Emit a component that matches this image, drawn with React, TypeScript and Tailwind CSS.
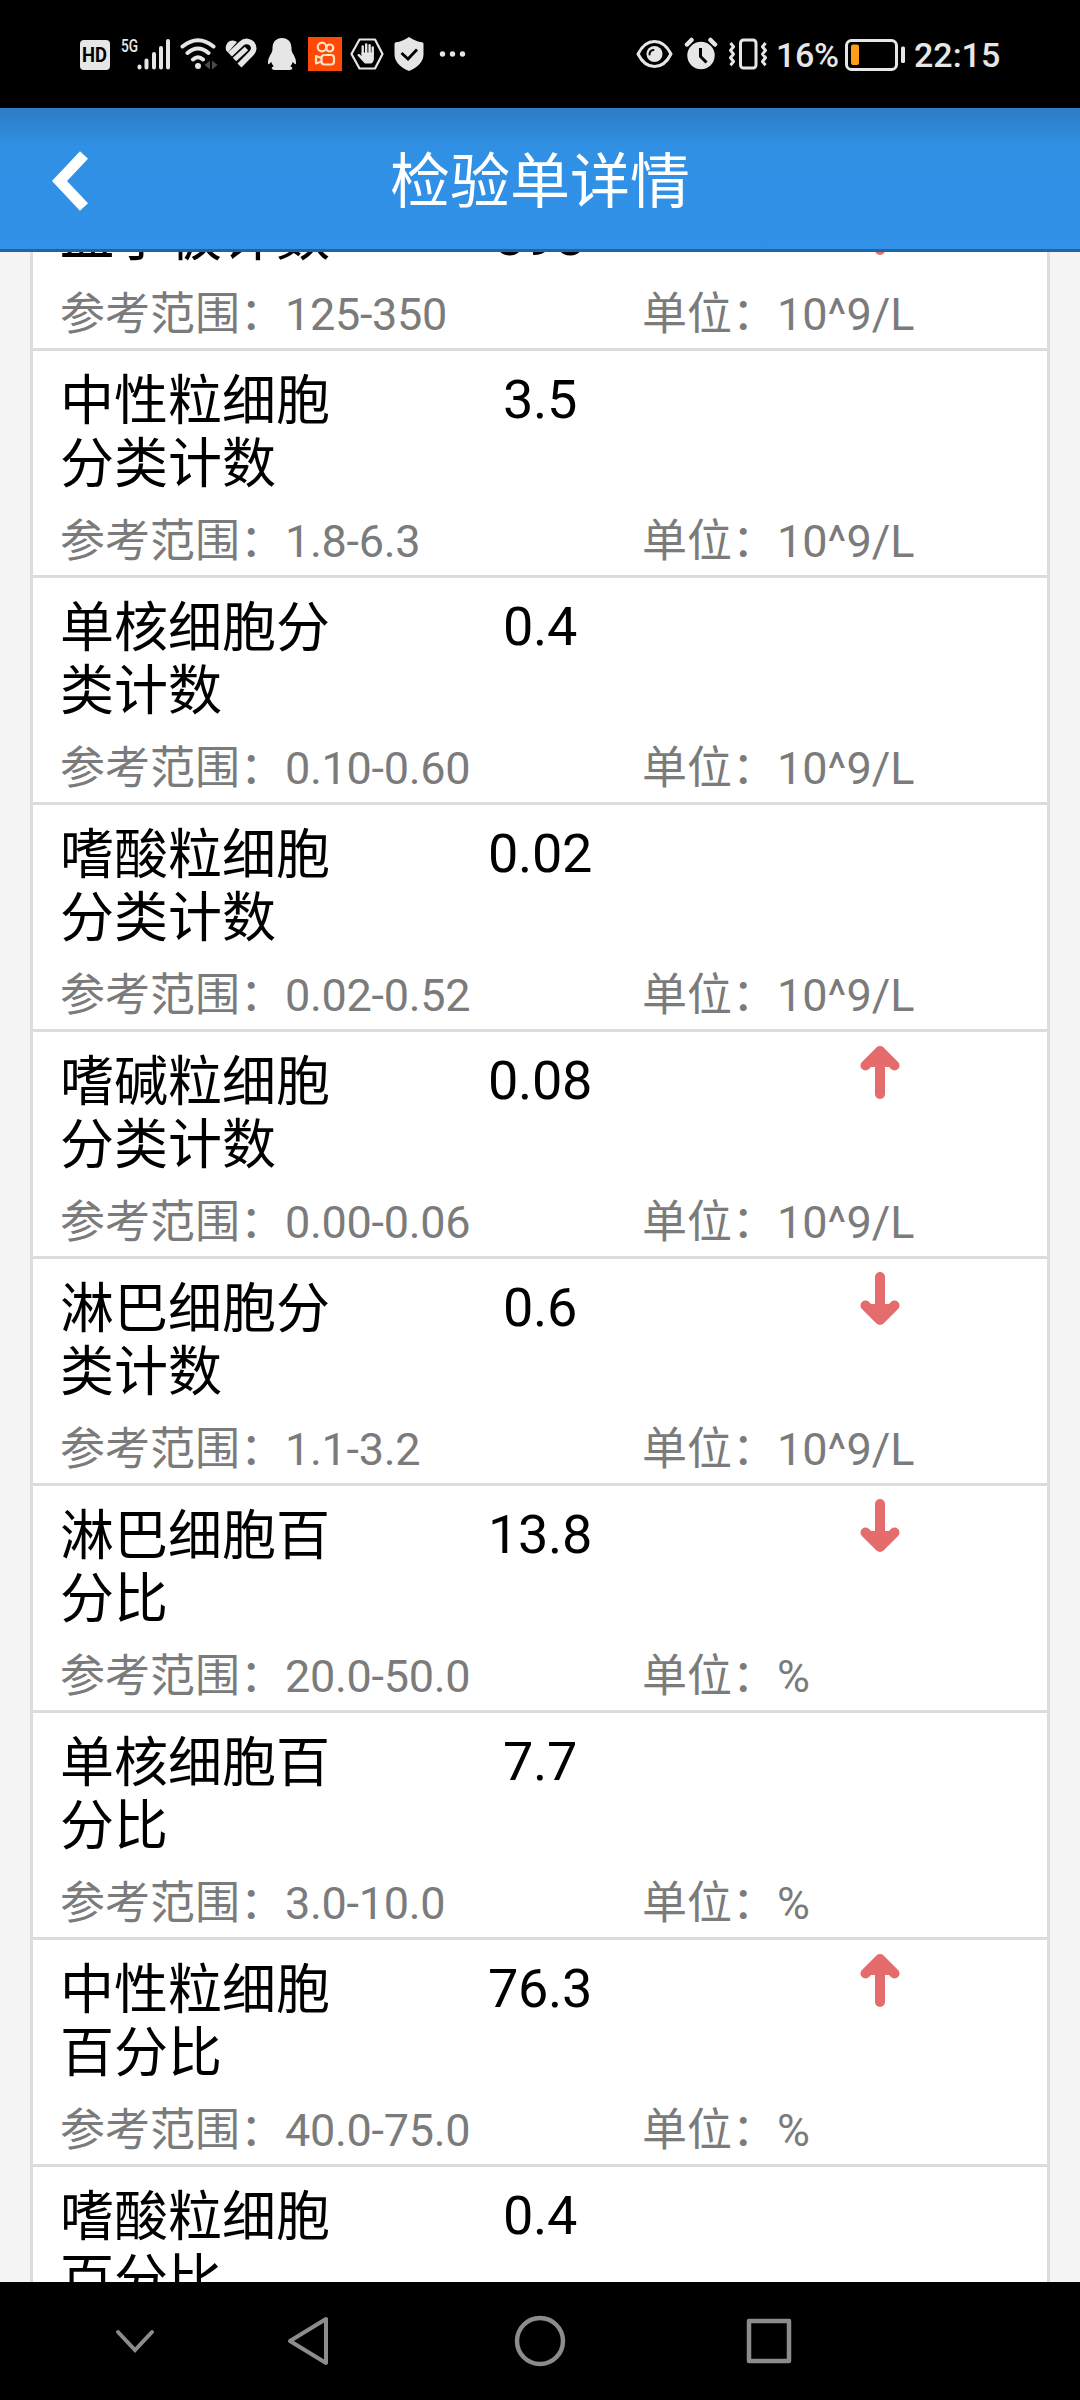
interface Item {
  name: string[];
  value: string;
  range: string;
  unit: string;
  trend?: "up" | "down";
}

const items: Item[] = [
  { name: ["血小板计数"], value: "398", range: "125-350", unit: "10^9/L", trend: "up" },
  { name: ["中性粒细胞", "分类计数"], value: "3.5", range: "1.8-6.3", unit: "10^9/L" },
  { name: ["单核细胞分", "类计数"], value: "0.4", range: "0.10-0.60", unit: "10^9/L" },
  { name: ["嗜酸粒细胞", "分类计数"], value: "0.02", range: "0.02-0.52", unit: "10^9/L" },
  { name: ["嗜碱粒细胞", "分类计数"], value: "0.08", range: "0.00-0.06", unit: "10^9/L", trend: "up" },
  { name: ["淋巴细胞分", "类计数"], value: "0.6", range: "1.1-3.2", unit: "10^9/L", trend: "down" },
  { name: ["淋巴细胞百", "分比"], value: "13.8", range: "20.0-50.0", unit: "%", trend: "down" },
  { name: ["单核细胞百", "分比"], value: "7.7", range: "3.0-10.0", unit: "%" },
  { name: ["中性粒细胞", "百分比"], value: "76.3", range: "40.0-75.0", unit: "%", trend: "up" },
  { name: ["嗜酸粒细胞", "百分比"], value: "0.4", range: "0.5-5.0", unit: "%" },
];

function TrendArrow({ trend }: { trend: "up" | "down" }) {
  return (
    <svg
      viewBox="0 0 40 54"
      className={`w-10 h-[54px] mt-[13px] ${trend === "down" ? "rotate-180" : ""}`}
      fill="none"
      stroke="#e46c6c"
      strokeWidth="10"
      strokeLinecap="round"
      strokeLinejoin="round"
    >
      <path d="M20 49V8" />
      <path d="M5.500 20.500 20 6l14.500 14.500" />
      <path d="M11 20h18L20 9z" fill="#e46c6c" strokeWidth="4" />
    </svg>
  );
}

function StatusBar() {
  return (
    <div className="h-[108px] shrink-0 flex items-start justify-between pt-[37px] pl-20 pr-20 text-[#e6e6e6]">
      <div className="flex items-start">
        <div className="w-[30px] h-[30px] mt-[3px] rounded-[4px] bg-[#e6e6e6] text-black text-[20px] leading-[31px] font-bold flex justify-center">
          <span className="scale-x-[0.92]">HD</span>
        </div>
        <div className="ml-[11px] w-[17px] text-[19px] leading-[18px] font-medium">
          <span className="inline-block origin-left scale-x-[0.72]">5G</span>
        </div>
        <svg className="w-[33px] h-[34px] -ml-px" viewBox="0 0 33 34" stroke="currentColor" strokeWidth="4" strokeLinecap="round">
          <path d="M2.500 29.500v1M9.500 23.500v7M17 17v13.500M24 11v19.500M31 4v26.500" />
        </svg>
        <svg className="w-[38px] h-[34px] ml-[10px]" viewBox="0 0 38 34" fill="none" stroke="currentColor" strokeWidth="4" strokeLinecap="round">
          <path d="M2.500 9.500Q18 -3 33.500 9.500M7.500 16Q18 7 28.500 16M13 22.500Q18 18 23 22.500" />
          <circle cx="18" cy="29" r="3" fill="currentColor" stroke="none" />
          <path d="M30 23.500v9l-5.500-4.500zM32 23.500v9l5.500-4.500z" fill="#4a4a4a" stroke="none" />
        </svg>
        <svg className="w-8 h-[34px] ml-[7px]" viewBox="0 0 32 34" fill="none" stroke="currentColor">
          <path d="M1.200 13.500C-1 7 5 1.500 10.500 4.200L12 5 3 15.500z" fill="currentColor" stroke="none" />
          <path d="M5 17.500 16.500 6.500C20 3.200 25 4 27.300 7.200c2.200 3 1.700 6.500-.8 9L14.500 28.500" strokeWidth="5.600" />
          <path d="M9.500 22.500 21.500 11.500" strokeWidth="5" />
        </svg>
        <svg className="w-[30px] h-[34px] ml-[10px]" viewBox="0 0 30 34" fill="currentColor">
          <path d="M15 1c-6 0-9.500 4.300-9.500 10 0 2-.2 3.500-1.200 5.200C2.500 19.500.8 22 1 26c.1 2 1.200 1.500 3.300-1.200.4 2 1.200 3.400 2.500 4.500-1.600.6-2.300 1.400-2 2.200.4 1 2 1.500 5.200 1.500h10.500c3 0 4.500-.5 4.800-1.500.2-.8-.6-1.600-2-2.200 1.200-1.100 2-2.500 2.400-4.500 2.100 2.700 3.200 3.200 3.300 1.200.2-4-1.500-6.500-3.300-9.800-1-1.700-1.200-3.200-1.200-5.200C24.500 5.300 21 1 15 1z" />
        </svg>
        <svg className="w-[34px] h-[34px] ml-[11px]" viewBox="0 0 34 34" fill="none" stroke="#ffe3c4" strokeWidth="2.200">
          <path d="M0 0h34v34H0z" fill="#ff4906" stroke="none" />
          <circle cx="14" cy="10" r="4.300" />
          <circle cx="21.800" cy="11" r="3.500" />
          <rect x="13.500" y="18" width="12.500" height="9.500" rx="3" />
          <path d="m13.500 21-5.500-2v7.500l5.500-2" strokeLinejoin="round" />
        </svg>
        <svg className="w-[34px] h-[34px] ml-2" viewBox="0 0 34 34" fill="none" stroke="currentColor">
          <path d="M9.500 2.500h15.500L32.500 17 25 31.500H9.500L1.500 17z" strokeWidth="2.200" strokeLinejoin="round" />
          <path d="M12.700 17V9.500M16.200 16V7.500M19.600 16V8.200M22.700 17v-6.500" strokeWidth="2.400" strokeLinecap="round" />
          <path d="M11.500 15.500h12.400v6.500c0 1.900-1 3.500-2.600 4.500h-6.500L7.600 18.500c-.5-1.200 1-2 2-1.200l2 1.700z" fill="currentColor" stroke="none" />
        </svg>
        <svg className="w-[30px] h-[34px] ml-[10px]" viewBox="0 0 30 34">
          <path d="M15 0c4.500 3.300 8.500 4.600 13 5.300 1 .2 1.500.8 1.500 1.800V17c0 7.500-5 13-14.500 17C5.500 30 .5 24.500.5 17V7.100c0-1 .5-1.600 1.500-1.800C6.500 4.600 10.500 3.300 15 0z" fill="currentColor" />
          <path d="m7.500 16 6.500 6 9-9.500" fill="none" stroke="#000" strokeWidth="2.800" />
        </svg>
        <svg className="w-[27px] h-[34px] ml-[15px]" viewBox="0 0 27 34" fill="currentColor">
          <circle cx="3.500" cy="17" r="2.700" />
          <circle cx="13.500" cy="17" r="2.700" />
          <circle cx="23.500" cy="17" r="2.700" />
        </svg>
      </div>
      <div className="flex items-start">
        <svg className="w-[38px] h-[34px]" viewBox="0 0 38 34" fill="none" stroke="currentColor" strokeWidth="3">
          <path d="M2 17C6 9 12 4.500 18.500 4.500S31 9 35 17c-4 8-10 12.500-16.500 12.500S6 25 2 17z" strokeLinejoin="round" />
          <circle cx="18.500" cy="17" r="8" fill="currentColor" stroke="none" />
          <path d="M13.500 17.500c0-2.500 1.500-4.300 4-4.600" stroke="#000" strokeWidth="2" strokeLinecap="round" />
        </svg>
        <svg className="w-[34px] h-[34px] ml-[10px]" viewBox="0 0 34 34" fill="none" stroke="currentColor">
          <circle cx="17" cy="18.500" r="13.700" fill="currentColor" stroke="none" />
          <path d="m3 7.500 4.500-4.500M31 7.500 26.500 3" strokeWidth="4.500" strokeLinecap="round" />
          <path d="M16.500 11v8.500l6 6" stroke="#000" strokeWidth="3" />
        </svg>
        <svg className="w-10 h-[34px] ml-[10px]" viewBox="0 0 40 34" fill="none" stroke="currentColor" strokeWidth="3">
          <rect x="12.500" y="3" width="15.500" height="28" rx="3" />
          <path d="m2.500 6 3 3.700-3 3.700 3 3.700-3 3.700 3 3.700-3 3.700M37.500 6l-3 3.700 3 3.700-3 3.700 3 3.700-3 3.700 3 3.700" strokeLinejoin="round" />
        </svg>
        <span className="ml-2 w-[62px] text-[34px] leading-[37px] font-medium tracking-[-0.3px]">16%</span>
        <svg className="w-[61px] h-[34px] ml-[7px]" viewBox="0 0 61 34" fill="none">
          <rect x="1.500" y="3.500" width="50" height="29" rx="5" stroke="currentColor" strokeWidth="3" />
          <rect x="6" y="7.500" width="8" height="20.500" rx="2" fill="#ff9d18" />
          <rect x="56" y="9.500" width="4" height="16.500" rx="1.500" fill="currentColor" />
        </svg>
        <span className="ml-2 w-[86px] text-[34px] leading-[37px] font-medium">22:15</span>
      </div>
    </div>
  );
}

function Row({ item }: { item: Item }) {
  return (
    <div className="shrink-0 border-b-[3px] border-[#dcdcdc] pl-[27px]">
      <div className="flex items-start text-[54px] leading-[63.500px] text-black">
        <div className="w-[340px] pt-[18.500px]">
          {item.name.map((line) => (
            <div key={line}>{line}</div>
          ))}
        </div>
        <div className="w-[280px] pt-[17px] text-center tracking-[-0.3px]">{item.value}</div>
        <div className="flex-1 flex justify-center pl-[33px]">
          {item.trend && <TrendArrow trend={item.trend} />}
        </div>
      </div>
      <div className="flex pt-[18px] h-[78.500px] text-[45px] leading-[53px] text-[#7b7b7b]">
        <div className="w-[582px]">
          参考范围：<span className="tracking-[-0.3px]">{item.range}</span>
        </div>
        <div>单位：{item.unit}</div>
      </div>
    </div>
  );
}

export default function App() {
  return (
    <div className="w-[1080px] h-[2400px] flex flex-col bg-black overflow-hidden font-[Roboto,'Noto_Sans_CJK_SC',sans-serif]">
      <StatusBar />

      {/* Header */}
      <div className="h-36 shrink-0 grid grid-cols-[140px_1fr_140px] items-center border-b-[3px] border-[#2264a3] bg-linear-to-b from-[#2c7cc5] via-[#3090e4] via-28% to-[#3191e8]">
        <svg className="w-10 h-[62px] ml-[50px] mt-1" viewBox="0 0 40 62" fill="none" stroke="#fff" strokeWidth="11">
          <path d="M34 5 9.500 31 34 57" />
        </svg>
        <h1 className="pt-2 text-center text-white text-[60px] leading-[70px]">检验单详情</h1>
      </div>

      {/* Result list, scrolled so that the first and last rows are cut off */}
      <div className="flex-1 min-h-0 overflow-hidden bg-[#f4f4f4] px-[30px]">
        <div className="flex flex-col -mt-[64.500px] border-x-[3px] border-[#dcdcdc] bg-white">
          {items.map((item) => (
            <Row key={item.name.join("")} item={item} />
          ))}
        </div>
      </div>

      {/* Navigation bar */}
      <div className="h-[118px] shrink-0 flex items-center pl-[115px]">
        <svg className="w-10 h-[52px]" viewBox="0 0 40 52" fill="none" stroke="#8c8c8c" strokeWidth="4" strokeLinecap="round">
          <path d="m3 17 17 18 17-18" />
        </svg>
        <svg className="w-[46px] h-[52px] ml-[130px]" viewBox="0 0 46 52" fill="none" stroke="#8c8c8c" strokeWidth="4" strokeLinejoin="round">
          <path d="M41 4v44L5 26z" />
        </svg>
        <svg className="w-[52px] h-[52px] ml-[183px]" viewBox="0 0 52 52" fill="none" stroke="#8c8c8c" strokeWidth="4.500">
          <circle cx="26" cy="26" r="23" />
        </svg>
        <svg className="w-[46px] h-[52px] ml-[180px]" viewBox="0 0 46 52" fill="none" stroke="#8c8c8c" strokeWidth="4.500" strokeLinejoin="round">
          <path d="M3 6h40v40H3z" />
        </svg>
      </div>
    </div>
  );
}
